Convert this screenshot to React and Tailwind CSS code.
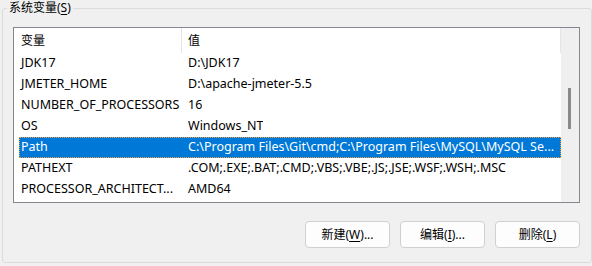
import React from "react";

const rows = [
  ["JDK17", "D:\\JDK17"],
  ["JMETER_HOME", "D:\\apache-jmeter-5.5"],
  ["NUMBER_OF_PROCESSORS", "16"],
  ["OS", "Windows_NT"],
  ["Path", "C:\\Program Files\\Git\\cmd;C:\\Program Files\\MySQL\\MySQL Se..."],
  ["PATHEXT", ".COM;.EXE;.BAT;.CMD;.VBS;.VBE;.JS;.JSE;.WSF;.WSH;.MSC"],
  ["PROCESSOR_ARCHITECT...", "AMD64"],
];

function Btn({ label, k, tail }) {
  return (
    <button className="w-[85px] h-[27px] bg-[#fdfdfd] border border-[#d0d0d0] rounded-[4px] text-[12px] text-black flex items-center justify-center">
      {label}(<span className="underline underline-offset-2">{k}</span>){tail}
    </button>
  );
}

export default function App() {
  return (
    <div
      className="w-[592px] h-[266px] bg-[#f0f0f0] overflow-hidden text-black"
      style={{ fontFamily: '"Noto Sans", "Noto Sans CJK SC", sans-serif' }}
    >
      <div className="pt-[8px] pl-[2px]">
        <div className="relative w-[590px] h-[255px] border border-[#dcdcdc] rounded-[3px] pt-[18px] pl-[10px]">
          <div className="absolute left-[4px] top-[-9px] px-[2px] bg-[#f0f0f0] text-[12px] leading-[16px]">
            系统变量(<span className="underline underline-offset-2">S</span>)
          </div>
          <div className="w-[567px] h-[176px] border border-[#828790] bg-white flex">
            <div className="w-[547px] flex flex-col">
              <div className="h-[25px] flex items-center text-[12px] relative">
                <div className="w-[168px] pl-[7px] h-full flex items-center border-r border-[#e5e5e5]">变量</div>
                <div className="pl-[6px] flex-1 h-full flex items-center border-r border-[#e5e5e5]">值</div>
              </div>
              {rows.map(([a, b]) => {
                const sel = a === "Path";
                return (
                  <div key={a} className="h-[21px] pl-[5px] flex text-[12.5px]">
                    <div
                      className={
                        "flex-1 flex items-center whitespace-nowrap " +
                        (sel ? "bg-[#0078d7] text-white border border-dotted border-[#f0a040]" : "border border-transparent")
                      }
                    >
                      <div className="w-[162px] pl-[1px] overflow-hidden">{a}</div>
                      <div className="pl-[6px] overflow-hidden">{b}</div>
                    </div>
                  </div>
                );
              })}
            </div>
            <div className="w-[18px] bg-[#efefef] relative">
              <div className="absolute left-[7px] top-[60px] w-[3px] h-[41px] bg-[#8a8a8a]" />
            </div>
          </div>
          <div className="flex justify-end gap-[10px] pr-[11px] mt-[18px]">
            <Btn label="新建" k="W" tail="..." />
            <Btn label="编辑" k="I" tail="..." />
            <Btn label="删除" k="L" tail="" />
          </div>
        </div>
      </div>
    </div>
  );
}
